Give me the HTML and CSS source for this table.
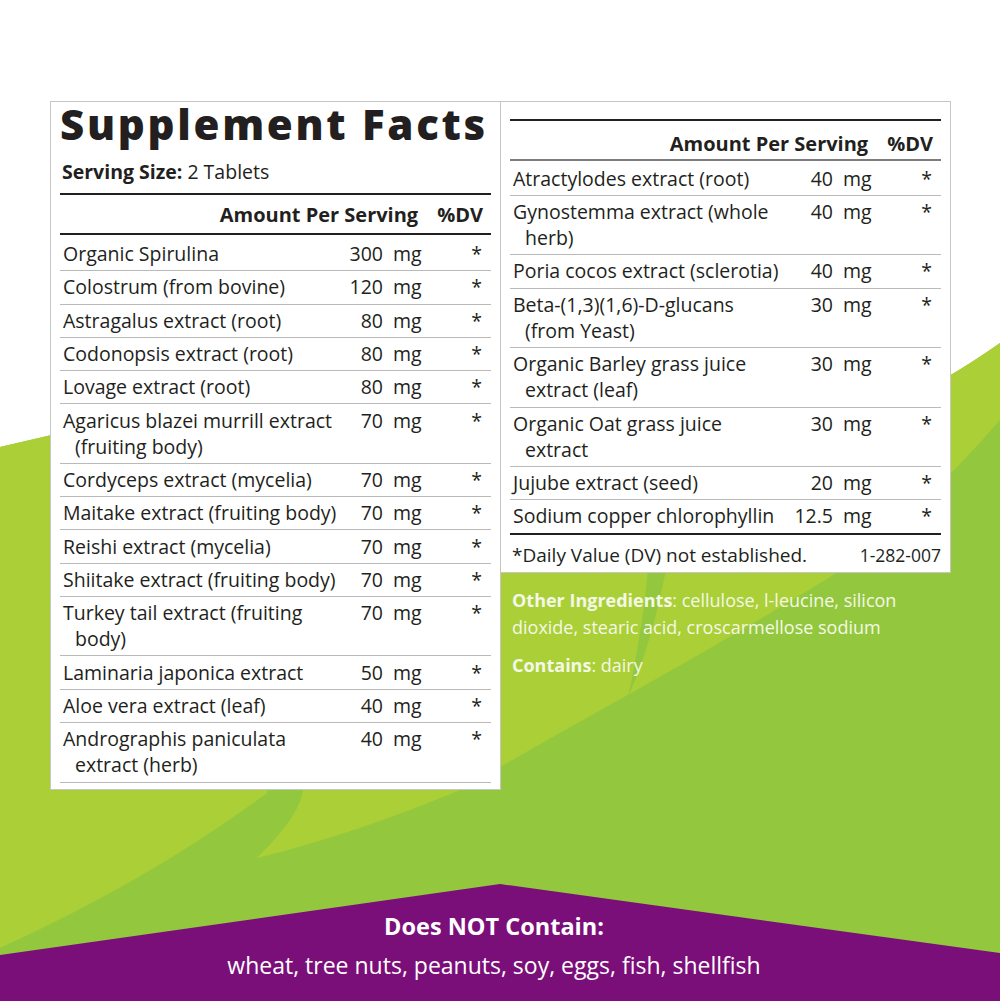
FILE: index.html
```html
<!DOCTYPE html>
<html lang="en">
<head>
<meta charset="utf-8">
<title>Supplement Facts</title>
<link rel="stylesheet" href="styles.css">
</head>
<body>
<div class="label">
  <svg class="bg" viewBox="0 0 1000 1001" width="1000" height="1001" aria-hidden="true">
    <defs>
      <clipPath id="greenclip"><path d="M0,447 Q30,440 60,433 L900,400 Q940,385 1000,343 L1000,1001 L0,1001 Z"/></clipPath>
    </defs>
    <path d="M0,447 Q30,440 60,433 L900,400 Q940,385 1000,343 L1000,1001 L0,1001 Z" fill="#93c83e"/>
    <g clip-path="url(#greenclip)">
      <path fill="#abcf37" d="M310,300 L1000,300 L1000,420 C965,460 905,525 830,577 C720,645 600,710 500,767 L460,790 C400,815 330,840 257,858 C285,830 300,810 303,790 L310,300 Z"/>
      <path fill="#abcf37" d="M0,300 L280,300 L267,793 Q150,880 0,948 Z"/>
      <path fill="#93c83e" d="M648,570 L666,570 C656,620 643,665 628,697 C636,660 643,620 648,570 Z"/>
    </g>
    <path fill="#7b0f7a" d="M0,955 L500,884 L1000,953 L1000,1001 L0,1001 Z"/>
  </svg>

  <div class="content">
    <div class="columns">
      <section class="panel panel-left">
        <h1 class="title">Supplement Facts</h1>
        <p class="serving"><b>Serving Size:</b> 2 Tablets</p>
        <div class="col-head"><span>Amount Per Serving</span><span>%DV</span></div>
        <div class="rows">
          <div class="row"><span class="name">Organic Spirulina</span><span class="amt">300</span><span class="unit">mg</span><span class="dv">*</span></div>
          <div class="row"><span class="name">Colostrum (from bovine)</span><span class="amt">120</span><span class="unit">mg</span><span class="dv">*</span></div>
          <div class="row"><span class="name">Astragalus extract (root)</span><span class="amt">80</span><span class="unit">mg</span><span class="dv">*</span></div>
          <div class="row"><span class="name">Codonopsis extract (root)</span><span class="amt">80</span><span class="unit">mg</span><span class="dv">*</span></div>
          <div class="row"><span class="name">Lovage extract (root)</span><span class="amt">80</span><span class="unit">mg</span><span class="dv">*</span></div>
          <div class="row"><span class="name">Agaricus blazei murrill extract<br>(fruiting body)</span><span class="amt">70</span><span class="unit">mg</span><span class="dv">*</span></div>
          <div class="row"><span class="name">Cordyceps extract (mycelia)</span><span class="amt">70</span><span class="unit">mg</span><span class="dv">*</span></div>
          <div class="row"><span class="name">Maitake extract (fruiting body)</span><span class="amt">70</span><span class="unit">mg</span><span class="dv">*</span></div>
          <div class="row"><span class="name">Reishi extract (mycelia)</span><span class="amt">70</span><span class="unit">mg</span><span class="dv">*</span></div>
          <div class="row"><span class="name">Shiitake extract (fruiting body)</span><span class="amt">70</span><span class="unit">mg</span><span class="dv">*</span></div>
          <div class="row"><span class="name">Turkey tail extract (fruiting<br>body)</span><span class="amt">70</span><span class="unit">mg</span><span class="dv">*</span></div>
          <div class="row"><span class="name">Laminaria japonica extract</span><span class="amt">50</span><span class="unit">mg</span><span class="dv">*</span></div>
          <div class="row"><span class="name">Aloe vera extract (leaf)</span><span class="amt">40</span><span class="unit">mg</span><span class="dv">*</span></div>
          <div class="row"><span class="name">Andrographis paniculata<br>extract (herb)</span><span class="amt">40</span><span class="unit">mg</span><span class="dv">*</span></div>
        </div>
      </section>

      <div class="side">
        <section class="panel panel-right">
          <div class="col-head"><span>Amount Per Serving</span><span>%DV</span></div>
          <div class="rows">
            <div class="row"><span class="name">Atractylodes extract (root)</span><span class="amt">40</span><span class="unit">mg</span><span class="dv">*</span></div>
            <div class="row"><span class="name">Gynostemma extract (whole<br>herb)</span><span class="amt">40</span><span class="unit">mg</span><span class="dv">*</span></div>
            <div class="row"><span class="name">Poria cocos extract (sclerotia)</span><span class="amt">40</span><span class="unit">mg</span><span class="dv">*</span></div>
            <div class="row"><span class="name">Beta-(1,3)(1,6)-D-glucans<br>(from Yeast)</span><span class="amt">30</span><span class="unit">mg</span><span class="dv">*</span></div>
            <div class="row"><span class="name">Organic Barley grass juice<br>extract (leaf)</span><span class="amt">30</span><span class="unit">mg</span><span class="dv">*</span></div>
            <div class="row"><span class="name">Organic Oat grass juice<br>extract</span><span class="amt">30</span><span class="unit">mg</span><span class="dv">*</span></div>
            <div class="row"><span class="name">Jujube extract (seed)</span><span class="amt">20</span><span class="unit">mg</span><span class="dv">*</span></div>
            <div class="row"><span class="name">Sodium copper chlorophyllin</span><span class="amt">12.5</span><span class="unit">mg</span><span class="dv">*</span></div>
          </div>
          <div class="footnote"><span>*Daily Value (DV) not established.</span><span class="code">1-282-007</span></div>
        </section>
        <div class="other">
          <p><b>Other Ingredients</b>: cellulose, l-leucine, silicon<br>dioxide, stearic acid, croscarmellose sodium</p>
          <p class="contains"><b>Contains</b>: dairy</p>
        </div>
      </div>
    </div>

    <footer class="allergen">
      <h2>Does NOT Contain:</h2>
      <p>wheat, tree nuts, peanuts, soy, eggs, fish, shellfish</p>
    </footer>
  </div>
</div>
</body>
</html>
```

FILE: styles.css
```css
* {
  box-sizing: border-box;
  margin: 0;
  padding: 0;
}

html,
body {
  background: #ffffff;
}

body {
  margin: 0;
  font-family: "Open Sans", "Noto Sans", sans-serif;
  color: #231f20;
}

.label {
  position: relative;
  width: 1000px;
  height: 1001px;
  overflow: hidden;
}

.bg {
  position: absolute;
  left: 0;
  top: 0;
  z-index: 0;
  display: block;
}

.content {
  position: relative;
  z-index: 1;
  padding-top: 101px;
}

.columns {
  display: flex;
  align-items: flex-start;
  padding-left: 50px;
}

.panel {
  background: #ffffff;
  border: 1px solid #c6c6c6;
  width: 451px;
  padding: 0 9px;
}

.panel-left {
  padding-bottom: 6px;
}

.side {
  width: 451px;
  margin-left: -1px;
}

.panel-right {
  padding-top: 17px;
}

.title {
  font-size: 42px;
  line-height: 42px;
  font-weight: 800;
  letter-spacing: 2.7px;
  margin-top: 1px;
  white-space: nowrap;
}

.serving {
  margin-top: 14.4px;
  font-size: 19.5px;
  line-height: 26px;
  padding: 0 0 7.6px 2px;
  border-bottom: 2px solid #231f20;
}

.serving b {
  font-weight: 700;
}

.col-head {
  display: flex;
  justify-content: flex-end;
  gap: 19px;
  padding-right: 8px;
  font-size: 20px;
  line-height: 26px;
  font-weight: 700;
  white-space: nowrap;
}

.panel-left .col-head {
  padding-top: 6.7px;
  padding-bottom: 5.3px;
  border-bottom: 2px solid #231f20;
}

.panel-right .col-head {
  border-top: 2px solid #231f20;
  padding-top: 10px;
  padding-bottom: 1.5px;
  border-bottom: 2px solid #7d7d7d;
}

.rows {
  margin-top: 3px;
}

.panel-right .rows {
  margin-top: 2px;
}

.row {
  display: grid;
  grid-template-columns: 1fr 44px 52px 56px;
  font-size: 19.5px;
  line-height: 26.2px;
  padding: 3.2px 0 2.9px;
  border-bottom: 1px solid #bababa;
}

.panel-right .row:last-child {
  border-bottom: 2px solid #231f20;
}

.name {
  padding-left: 15px;
  text-indent: -12px;
  white-space: nowrap;
}

.amt {
  text-align: right;
  white-space: nowrap;
}

.unit {
  padding-left: 10px;
}

.dv {
  text-align: right;
  padding-right: 9px;
}

.footnote {
  display: flex;
  justify-content: space-between;
  align-items: baseline;
  padding: 8.3px 0 4.7px 2px;
  font-size: 19px;
  line-height: 24px;
  white-space: nowrap;
}

.code {
  font-size: 17.5px;
}

.other {
  padding: 14.5px 0 0 12px;
  color: #f4f8e6;
  font-size: 18px;
  line-height: 26.5px;
}

.other b {
  font-weight: 700;
}

.contains {
  margin-top: 12px;
}

.allergen {
  margin-top: 121.6px;
  padding-right: 12px;
  text-align: center;
  color: #ffffff;
}

.allergen h2 {
  font-size: 23.5px;
  line-height: 30px;
  font-weight: 700;
}

.allergen p {
  margin-top: 9px;
  font-size: 23px;
  line-height: 30px;
}
```
